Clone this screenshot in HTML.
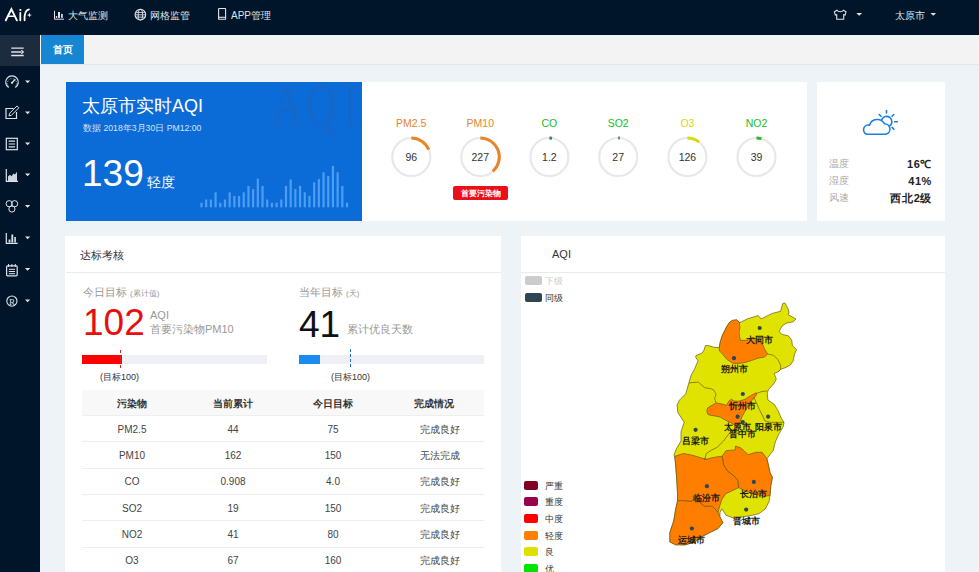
<!DOCTYPE html>
<html><head><meta charset="utf-8">
<style>
*{box-sizing:border-box;margin:0;padding:0}
html,body{width:979px;height:572px;overflow:hidden;background:#eef3f7;font-family:"Liberation Sans",sans-serif;color:#333}
div{position:absolute;white-space:nowrap}
#top{left:0;top:0;width:979px;height:35px;background:#001529}
#side{left:0;top:35px;width:40px;height:537px;background:#001529}
#toggle{left:0;top:0;width:40px;height:31px;background:#1c2b3e}
#tabs{left:40px;top:35px;width:939px;height:30px;background:#f3f3f3;border-bottom:1px solid #e2e6ea}
.tab{left:1px;top:0px;width:43px;height:29px;background:#1686d3;color:#fff;font-size:10px;line-height:30px;text-align:center;font-weight:bold}
.card{background:#fff}
.navt{top:10px;color:#dfe3e8;font-size:10px;line-height:12px;font-weight:500}
.gl{top:117px;width:60px;text-align:center;font-size:10.5px;line-height:12px}
.gv{top:151px;width:60px;text-align:center;font-size:10.5px;line-height:12px;color:#333}
.wl{left:829px;font-size:10px;color:#aaa;line-height:12px}
.wv{right:47px;font-size:11px;font-weight:bold;color:#222;line-height:12px;text-align:right;letter-spacing:0.6px}
.th{top:398px;width:100px;text-align:center;font-size:10px;line-height:12px;color:#333;font-weight:bold}
.td{width:100px;text-align:center;font-size:10px;line-height:12px;color:#444}
.lg{left:545px;font-size:9px;line-height:10px;color:#333}
.sw{left:524px;width:14px;height:9px;border-radius:2px}
svg{position:absolute;left:0;top:0}
.wm{top:-7px;font-family:'Liberation Serif',serif;font-size:60px;line-height:60px;color:#1767c8;transform:scaleX(0.7);transform-origin:0 0}
</style></head><body>
<div id="top">
  <div class="navt" style="left:68px">大气监测</div>
  <div class="navt" style="left:150px">网格监管</div>
  <div class="navt" style="left:231px">APP管理</div>
  <div class="navt" style="left:895px">太原市</div>
</div>
<div id="side"><div id="toggle"></div></div>
<div id="tabs"><div class="tab">首页</div></div>

<div class="card" style="left:66px;top:82px;width:296px;height:139px;background:#0b6bd7;overflow:hidden">
  <div class="wm" style="left:206px">A</div><div class="wm" style="left:240px">Q</div><div class="wm" style="left:280px;transform:scaleX(0.5)">I</div>
</div>
<div class="card" style="left:362px;top:82px;width:445px;height:139px"></div>
<div class="card" style="left:817px;top:82px;width:128px;height:139px"></div>
<div class="card" style="left:65px;top:236px;width:436px;height:340px"></div>
<div class="card" style="left:521px;top:236px;width:424px;height:340px"></div>

<!-- blue card text -->
<div style="left:82px;top:96px;font-size:18px;line-height:20px;color:#fff">太原市实时AQI</div>
<div style="left:83px;top:123px;font-size:8.7px;line-height:10px;color:#d3e4f8">数据 2018年3月30日 PM12:00</div>
<div style="left:82px;top:154px;font-size:37px;line-height:40px;color:#fff">139</div>
<div style="left:147px;top:174px;font-size:14px;line-height:16px;color:#fff">轻度</div>

<div class="gl" style="left:381.3px;color:#e8842a">PM2.5</div><div class="gv" style="left:381.3px">96</div>
<div class="gl" style="left:450.3px;color:#e8842a">PM10</div><div class="gv" style="left:450.3px">227</div>
<div class="gl" style="left:519.4px;color:#22bb22">CO</div><div class="gv" style="left:519.4px">1.2</div>
<div class="gl" style="left:588.2px;color:#22bb22">SO2</div><div class="gv" style="left:588.2px">27</div>
<div class="gl" style="left:657.4px;color:#d8d800">O3</div><div class="gv" style="left:657.4px">126</div>
<div class="gl" style="left:726.5px;color:#22bb22">NO2</div><div class="gv" style="left:726.5px">39</div>
<div style="left:453px;top:185.5px;width:55px;height:14px;background:#ec0f19;border-radius:2px;color:#fff;font-size:8.3px;line-height:14px;text-align:center;font-weight:bold">首要污染物</div>

<!-- weather -->
<div class="wl" style="top:158px">温度</div>
<div class="wl" style="top:175px">湿度</div>
<div class="wl" style="top:192px">风速</div>
<div class="wv" style="top:158px">16℃</div>
<div class="wv" style="top:175px">41%</div>
<div class="wv" style="top:192px">西北2级</div>

<!-- left bottom card -->
<div style="left:80px;top:249px;font-size:11px;line-height:12px;color:#333">达标考核</div>
<div style="left:66px;top:272px;width:435px;height:1px;background:#e9ecef"></div>
<div style="left:83px;top:286px;font-size:11px;line-height:12px;color:#999">今日目标 <span style="font-size:8px">(累计值)</span></div>
<div style="left:83px;top:303px;font-size:37px;line-height:40px;color:#e60f0f">102</div>
<div style="left:150px;top:309px;font-size:11px;line-height:12px;color:#999">AQI</div>
<div style="left:150px;top:323px;font-size:11px;line-height:12px;color:#999">首要污染物PM10</div>
<div style="left:82px;top:355px;width:185px;height:9px;background:#eef0f5"></div>
<div style="left:82px;top:355px;width:40px;height:9px;background:#f00"></div>
<div style="left:100px;top:372px;font-size:9px;line-height:11px;color:#333">(目标100)</div>

<div style="left:299px;top:286px;font-size:11px;line-height:12px;color:#999">当年目标 <span style="font-size:8px">(天)</span></div>
<div style="left:299px;top:305px;font-size:37px;line-height:40px;color:#111">41</div>
<div style="left:347px;top:323px;font-size:11px;line-height:12px;color:#999">累计优良天数</div>
<div style="left:299px;top:355px;width:185px;height:9px;background:#eef0f5"></div>
<div style="left:299px;top:355px;width:21px;height:9px;background:#1a8cf0"></div>
<div style="left:331px;top:372px;font-size:9px;line-height:11px;color:#333">(目标100)</div>

<div style="left:82px;top:390px;width:402px;height:25px;background:#f8f8f8"></div>
<div class="th" style="left:82px">污染物</div>
<div class="th" style="left:183px">当前累计</div>
<div class="th" style="left:283px">今日目标</div>
<div class="th" style="left:384px">完成情况</div>
<div style="left:82px;top:415px;width:402px;height:1px;background:#eee"></div>
<div style="left:82px;top:441px;width:402px;height:1px;background:#eee"></div>
<div style="left:82px;top:468px;width:402px;height:1px;background:#eee"></div>
<div style="left:82px;top:494px;width:402px;height:1px;background:#eee"></div>
<div style="left:82px;top:520px;width:402px;height:1px;background:#eee"></div>
<div style="left:82px;top:547px;width:402px;height:1px;background:#eee"></div>

<div class="td" style="left:82px;top:424px">PM2.5</div><div class="td" style="left:183px;top:424px">44</div><div class="td" style="left:283px;top:424px">75</div><div class="td" style="left:390px;top:424px">完成良好</div>
<div class="td" style="left:82px;top:450px">PM10</div><div class="td" style="left:183px;top:450px">162</div><div class="td" style="left:283px;top:450px">150</div><div class="td" style="left:390px;top:450px">无法完成</div>
<div class="td" style="left:82px;top:476px">CO</div><div class="td" style="left:183px;top:476px">0.908</div><div class="td" style="left:283px;top:476px">4.0</div><div class="td" style="left:390px;top:476px">完成良好</div>
<div class="td" style="left:82px;top:503px">SO2</div><div class="td" style="left:183px;top:503px">19</div><div class="td" style="left:283px;top:503px">150</div><div class="td" style="left:390px;top:503px">完成良好</div>
<div class="td" style="left:82px;top:529px">NO2</div><div class="td" style="left:183px;top:529px">41</div><div class="td" style="left:283px;top:529px">80</div><div class="td" style="left:390px;top:529px">完成良好</div>
<div class="td" style="left:82px;top:555px">O3</div><div class="td" style="left:183px;top:555px">67</div><div class="td" style="left:283px;top:555px">160</div><div class="td" style="left:390px;top:555px">完成良好</div>

<!-- map card -->
<div style="left:552px;top:248px;font-size:11px;line-height:12px;color:#333">AQI</div>
<div style="left:521px;top:272px;width:424px;height:1px;background:#e9ecef"></div>
<div style="left:525px;top:276px;width:17px;height:9px;border-radius:2px;background:#ccc"></div>
<div class="lg" style="top:276px;color:#ccc">下级</div>
<div style="left:525px;top:293px;width:17px;height:9px;border-radius:2px;background:#2f4554"></div>
<div class="lg" style="top:293px">同级</div>
<div class="sw" style="top:481px;background:#7e0023"></div><div class="lg" style="top:481px">严重</div>
<div class="sw" style="top:497px;background:#99004c"></div><div class="lg" style="top:497px">重度</div>
<div class="sw" style="top:514px;background:#ff0000"></div><div class="lg" style="top:514px">中度</div>
<div class="sw" style="top:531px;background:#ff7e00"></div><div class="lg" style="top:531px">轻度</div>
<div class="sw" style="top:547px;background:#e0e000"></div><div class="lg" style="top:547px">良</div>
<div class="sw" style="top:564px;background:#00e400"></div><div class="lg" style="top:564px">优</div>

<svg width="979" height="572" viewBox="0 0 979 572" style="font-family:'Liberation Sans',sans-serif">
<g fill="none" stroke="#dfe3ea" stroke-width="1.1">
<!-- hamburger -->
<path d="M11.2 48.1H23.7M11.2 52H21.5M11.2 55.5H23.7" stroke-width="1.3"/>
<path d="M21.3 50.3L23.4 52L21.3 53.7" stroke-width="1.1"/>
<!-- speedometer -->
<path d="M8.7 87.6A6.3 6.3 0 1 1 15.3 87.6" stroke-width="1.2"/>
<path d="M8.5 86.2A4.6 4.6 0 1 1 15.5 86.2" stroke-width="1" stroke-dasharray="0.7 1.5"/>
<path d="M12 82.8L15.3 79.3" stroke-width="1.3"/>
<circle cx="12" cy="82.8" r="1.1" fill="#dfe3ea" stroke="none"/>
<!-- edit -->
<path d="M13.5 108.5H6V118.5H16.5V112" stroke-width="1.2"/>
<path d="M9 116L9.6 113.3L17 105.9L18.9 107.8L11.5 115.2Z" stroke-width="1"/>
<!-- list -->
<rect x="6.3" y="138.3" width="11" height="11.4" stroke-width="1.2"/>
<path d="M8.6 141.2H15M8.6 144H15M8.6 146.8H15" stroke-width="1.2"/>
<!-- area chart -->
<path d="M6.3 169V181.3H18" stroke-width="1.2"/>
<path d="M8 181V176.5L10 174.8L11.5 176.3L13.5 173.5L15 174.5L17 171.8V181Z" fill="#cfd5dc" stroke="none"/>
<!-- three circles -->
<circle cx="9.2" cy="203.7" r="3.1" stroke-width="1"/>
<circle cx="14.6" cy="203.7" r="3.1" stroke-width="1"/>
<circle cx="11.9" cy="209" r="3.1" stroke-width="1"/>
<!-- bar chart -->
<path d="M6.3 233V243.3H17.7" stroke-width="1.2"/>
<rect x="8.6" y="239.5" width="1.8" height="3" fill="#dfe3ea" stroke="none"/>
<rect x="11.4" y="234.5" width="1.8" height="8" fill="#dfe3ea" stroke="none"/>
<rect x="14.2" y="237" width="1.8" height="5.5" fill="#c8ced6" stroke="none"/>
<!-- notepad -->
<rect x="6.6" y="265.8" width="10.6" height="10" rx="1" stroke-width="1.2"/>
<path d="M8.5 264V266.8M11.9 264V266.8M15.3 264V266.8" stroke-width="1"/>
<path d="M8.8 269.3H15M8.8 271.5H15M8.8 273.7H15" stroke-width="1"/>
<!-- R -->
<circle cx="11.9" cy="301.1" r="5.1" stroke-width="1.1"/>
</g>
<text x="11.9" y="304.6" text-anchor="middle" font-family="Liberation Serif" font-size="9" fill="#dfe3ea">R</text>
<g fill="#dfe3ea">
<path d="M25 80.5H30.2L27.6 83.3Z"/>
<path d="M25 111.5H30.2L27.6 114.3Z"/>
<path d="M25 142.5H30.2L27.6 145.3Z"/>
<path d="M25 173.5H30.2L27.6 176.3Z"/>
<path d="M25 205H30.2L27.6 207.8Z"/>
<path d="M25 236.5H30.2L27.6 239.3Z"/>
<path d="M25 268H30.2L27.6 270.8Z"/>
<path d="M25 299.5H30.2L27.6 302.3Z"/>
<!-- top carets -->
<path d="M856.3 13H862.1L859.2 15.8Z"/>
<path d="M930.5 13H936.1L933.3 15.8Z"/>
</g>
<!-- top nav icons -->
<g fill="none" stroke="#dfe3ea" stroke-width="1">
<path d="M54.5 10.8V19.2H64"/>
</g>
<g fill="#dfe3ea"><rect x="55.8" y="16" width="1.4" height="1.9"/><rect x="58" y="12" width="2" height="5.9"/><rect x="61" y="13.9" width="1.9" height="4" fill="#c8ced6"/></g>
<g fill="none" stroke="#dfe3ea" stroke-width="1">
<circle cx="140.4" cy="14.7" r="5.3" stroke-width="1.1"/>
<ellipse cx="140.4" cy="14.7" rx="2.2" ry="5.3" stroke-width="0.9"/>
<path d="M135.5 12.4H145.3M135.2 14.8H145.6M135.5 17.1H145.3" stroke-width="0.9"/>
<rect x="218.6" y="8.5" width="7" height="10.8" rx="0.4" stroke-width="1.1"/>
<path d="M218.6 17.3H225.6" stroke-width="1.1"/>
<path d="M837 10.2L834.4 11.8L835.3 15.1L836.7 14.7V19.3H843.7V14.7L845.1 15.1L846 11.8L843.4 10.2C842.7 11.3 841.5 11.7 840.2 11.7C838.9 11.7 837.7 11.3 837 10.2Z" stroke-width="1.1"/>
</g>
<!-- logo -->
<g fill="none" stroke="#fff" stroke-linecap="round">
<path d="M5.8 20.3L11.4 9.2L16.9 20.3" stroke-width="1.9"/>
<path d="M8.6 16.2H14.2" stroke-width="1.5"/>
<path d="M20.3 12.8V20.3" stroke-width="1.8"/>
<path d="M24.6 20.3C24.2 14.5 25.5 10.3 28.9 9.4" stroke-width="1.8"/>
</g>
<circle cx="20.4" cy="10" r="1.1" fill="#fff"/>
<path d="M29.4 12.6L30 14.5L31.9 15.1L30 15.7L29.4 17.6L28.8 15.7L26.9 15.1L28.8 14.5Z" fill="#fff"/>
<!-- weather cloud -->
<g fill="none" stroke="#1b7ee4" stroke-width="1.6" stroke-linecap="round">
<path d="M867 134.3H886A5.4 5.4 0 0 0 884.5 123.7A8.2 8.2 0 0 0 869.5 125.2A4.6 4.6 0 1 0 867 134.3Z"/>
<path d="M881.7 119.6A5.3 5.3 0 1 1 889.5 126.1"/>
<path d="M886.5 113V110.6M892 116.3L893.8 114.5M894.7 121.8H897.3M892 127.3L893.8 129.1M881 116.3L879.2 114.5"/>
</g>

<rect x="200.40" y="202.7" width="2.2" height="4.6" fill="#4c9df4"/>
<rect x="205.09" y="199.5" width="2.2" height="7.8" fill="#4c9df4"/>
<rect x="209.79" y="199.5" width="2.2" height="7.8" fill="#4c9df4"/>
<rect x="214.48" y="192.3" width="2.2" height="15.0" fill="#4c9df4"/>
<rect x="219.18" y="202.7" width="2.2" height="4.6" fill="#4c9df4"/>
<rect x="223.87" y="199.5" width="2.2" height="7.8" fill="#4c9df4"/>
<rect x="228.56" y="192.3" width="2.2" height="15.0" fill="#4c9df4"/>
<rect x="233.26" y="195.9" width="2.2" height="11.4" fill="#4c9df4"/>
<rect x="237.95" y="195.9" width="2.2" height="11.4" fill="#4c9df4"/>
<rect x="242.65" y="192.3" width="2.2" height="15.0" fill="#4c9df4"/>
<rect x="247.34" y="185.9" width="2.2" height="21.4" fill="#4c9df4"/>
<rect x="252.03" y="189.1" width="2.2" height="18.2" fill="#4c9df4"/>
<rect x="256.73" y="178.6" width="2.2" height="28.7" fill="#4c9df4"/>
<rect x="261.42" y="185.9" width="2.2" height="21.4" fill="#4c9df4"/>
<rect x="266.12" y="199.5" width="2.2" height="7.8" fill="#4c9df4"/>
<rect x="270.81" y="202.7" width="2.2" height="4.6" fill="#4c9df4"/>
<rect x="275.50" y="202.7" width="2.2" height="4.6" fill="#4c9df4"/>
<rect x="280.20" y="199.5" width="2.2" height="7.8" fill="#4c9df4"/>
<rect x="284.89" y="185.9" width="2.2" height="21.4" fill="#4c9df4"/>
<rect x="289.59" y="179.5" width="2.2" height="27.8" fill="#4c9df4"/>
<rect x="294.28" y="189.1" width="2.2" height="18.2" fill="#4c9df4"/>
<rect x="298.97" y="185.9" width="2.2" height="21.4" fill="#4c9df4"/>
<rect x="303.67" y="192.3" width="2.2" height="15.0" fill="#4c9df4"/>
<rect x="308.36" y="195.9" width="2.2" height="11.4" fill="#4c9df4"/>
<rect x="313.06" y="182.3" width="2.2" height="25.0" fill="#4c9df4"/>
<rect x="317.75" y="179.1" width="2.2" height="28.2" fill="#4c9df4"/>
<rect x="322.44" y="172.3" width="2.2" height="35.0" fill="#4c9df4"/>
<rect x="327.14" y="175.9" width="2.2" height="31.4" fill="#4c9df4"/>
<rect x="331.83" y="165.9" width="2.2" height="41.4" fill="#4c9df4"/>
<rect x="336.53" y="172.3" width="2.2" height="35.0" fill="#4c9df4"/>
<rect x="341.22" y="185.9" width="2.2" height="21.4" fill="#4c9df4"/>
<rect x="345.91" y="202.7" width="2.2" height="4.6" fill="#4c9df4"/>
<circle cx="411.3" cy="157" r="19" fill="none" stroke="#e8e8e8" stroke-width="2.2"/>
<path d="M411.3,138 A19,19 0 0 1 428.79,149.58" fill="none" stroke="#e8842a" stroke-width="3"/>
<circle cx="480.3" cy="157" r="19" fill="none" stroke="#e8e8e8" stroke-width="2.2"/>
<path d="M480.3,138 A19,19 0 0 1 492.77,171.34" fill="none" stroke="#e8842a" stroke-width="3"/>
<circle cx="549.4" cy="157" r="19" fill="none" stroke="#e8e8e8" stroke-width="2.2"/>
<path d="M549.4,138 A19,19 0 0 1 552.04,138.18" fill="none" stroke="#3a8f3a" stroke-width="3"/>
<circle cx="618.2" cy="157" r="19" fill="none" stroke="#e8e8e8" stroke-width="2.2"/>
<path d="M618.2,138 A19,19 0 0 1 619.86,138.07" fill="none" stroke="#3a8f3a" stroke-width="3"/>
<circle cx="687.4" cy="157" r="19" fill="none" stroke="#e8e8e8" stroke-width="2.2"/>
<path d="M687.4,138 A19,19 0 0 1 699.10,142.03" fill="none" stroke="#d4dc10" stroke-width="3"/>
<circle cx="756.5" cy="157" r="19" fill="none" stroke="#e8e8e8" stroke-width="2.2"/>
<path d="M756.5,138 A19,19 0 0 1 761.42,138.65" fill="none" stroke="#2db52d" stroke-width="3"/>
<!-- dashed markers -->
<line x1="120.5" y1="350" x2="120.5" y2="369" stroke="#e02020" stroke-width="1" stroke-dasharray="3,2"/>
<line x1="350.5" y1="349" x2="350.5" y2="368" stroke="#1a6fd0" stroke-width="1" stroke-dasharray="3,2"/>
<polygon points="782.7,303.6 784.8,302.9 787.6,307.8 789.0,312.0 788.3,314.8 796.0,319.0 793.1,321.8 786.2,323.2 782.0,326.0 779.2,331.6 782.0,334.4 788.3,335.8 791.7,340.0 792.4,345.6 796.6,349.7 794.5,354.0 793.1,361.0 790.3,365.1 784.8,367.9 780.6,369.3 777.8,372.1 774.2,373.4 776.3,379.0 774.2,383.2 768.6,389.5 767.2,393.0 767.9,400.0 774.2,404.2 778.4,411.2 781.2,418.1 784.0,422.3 783.3,426.5 778.4,434.9 775.6,441.2 774.7,444.4 773.2,450.7 766.9,458.6 770.0,472.7 772.4,477.5 770.8,485.3 770.0,495.5 769.2,501.0 765.3,508.9 759.0,513.6 752.7,515.2 743.3,516.8 733.9,518.3 726.0,515.2 722.1,508.9 720.0,512.0 719.9,516.9 722.8,522.7 718.0,528.5 710.3,532.3 702.6,536.2 694.9,541.9 685.3,544.8 675.7,544.8 669.9,541.9 669.9,532.3 673.8,520.8 675.7,509.2 677.6,500.6 677.6,493.8 676.7,478.5 675.7,465.0 674.7,456.3 673.9,455.2 676.3,448.9 681.0,441.0 681.0,431.6 684.2,422.2 677.9,412.7 677.1,404.9 679.4,400.2 685.7,393.9 688.9,382.9 691.2,375.0 694.4,369.4 698.0,360.8 695.6,357.1 696.2,355.3 701.7,353.5 704.2,349.8 705.4,345.5 707.8,345.5 714.0,347.3 719.3,347.5 720.4,341.4 722.5,335.1 726.7,326.7 729.8,322.0 732.5,320.4 736.7,319.9 739.5,322.5 740.3,322.5 747.0,319.0 758.2,315.5 761.0,319.0 772.2,313.4 780.6,311.3" fill="#e0e300" stroke="#6a5a10" stroke-width="0.7"/>
<polygon points="732.5,320.4 736.7,319.9 739.5,322.5 739.8,327.7 739.1,333.0 740.3,340.3 746.6,340.3 752.9,337.2 759.2,340.3 762.4,343.5 764.5,348.7 767.6,354.0 764.5,357.1 758.2,358.2 751.9,360.3 745.6,362.4 739.3,363.4 733.0,363.4 726.7,359.2 722.5,354.0 719.3,350.8 719.3,347.5 720.4,341.4 722.5,335.1 726.7,326.7 729.8,322.0" fill="#ff7e00" stroke="#6a5a10" stroke-width="0.7"/>
<polygon points="707.6,408.1 710.5,406.1 716.1,402.9 722.5,404.1 726.5,405.3 729.0,400.9 731.4,399.3 733.8,400.9 738.6,401.3 745.0,399.3 751.5,395.2 756.3,392.8 756.3,395.2 751.5,400.9 748.3,405.7 745.0,411.3 741.8,417.0 740.2,421.8 739.4,424.2 737.8,426.2 734.6,425.0 730.6,422.6 725.7,420.2 720.1,417.0 716.1,416.2 711.3,415.4 708.0,414.5 706.8,411.3" fill="#ff7e00" stroke="#6a5a10" stroke-width="0.7"/>
<polygon points="722.1,456.2 726.0,450.7 735.4,449.9 735.4,446.0 740.2,447.6 744.1,450.7 748.0,454.7 755.9,452.3 762.2,452.3 766.9,458.6 770.0,472.7 772.4,477.5 770.8,485.3 770.0,495.5 763.7,496.3 754.3,494.0 746.4,491.6 738.6,487.7 737.8,480.6 733.9,475.9 727.6,471.2 723.6,464.9" fill="#ff7e00" stroke="#6a5a10" stroke-width="0.7"/>
<polygon points="674.7,456.3 683.4,453.5 693.0,455.4 702.6,458.3 706.5,459.2 714.2,457.3 722.1,456.2 723.6,464.9 727.6,471.2 733.9,475.9 737.8,480.6 738.6,487.7 731.5,491.0 725.7,493.8 721.8,499.6 719.9,505.4 718.0,512.1 712.2,506.3 704.5,506.3 700.7,503.5 696.8,497.7 691.1,501.5 681.5,500.6 677.6,500.6 677.6,493.8 676.7,478.5 675.7,465.0" fill="#ff7e00" stroke="#6a5a10" stroke-width="0.7"/>
<polygon points="677.6,500.6 681.5,500.6 691.1,501.5 696.8,497.7 700.7,503.5 704.5,506.3 712.2,506.3 718.0,512.1 719.9,516.9 722.8,522.7 718.0,528.5 710.3,532.3 702.6,536.2 694.9,541.9 685.3,544.8 675.7,544.8 669.9,541.9 669.9,532.3 673.8,520.8 675.7,509.2" fill="#ff7e00" stroke="#6a5a10" stroke-width="0.7"/>
<polyline points="767.6,354.0 773.6,355.3 777.8,359.5 780.6,365.1 780.6,369.3 777.8,372.1" fill="none" stroke="#6a5a10" stroke-width="0.7"/>
<polyline points="688.9,382.9 698.3,382.1 704.6,387.6 711.3,388.8 714.1,390.4 716.1,394.4 714.5,398.5 716.1,402.9" fill="none" stroke="#6a5a10" stroke-width="0.7"/>
<polyline points="756.3,393.5 761.6,391.6 767.2,390.9" fill="none" stroke="#6a5a10" stroke-width="0.7"/>
<polyline points="754.0,397.5 759.5,409.8 763.0,416.7 765.0,421.0 770.0,422.3 784.0,422.3" fill="none" stroke="#6a5a10" stroke-width="0.7"/>
<polyline points="737.8,426.2 733.0,430.0 728.2,434.7 723.5,441.0 717.2,447.3 710.9,450.5 706.2,453.6 704.6,459.9" fill="none" stroke="#6a5a10" stroke-width="0.7"/>
<polyline points="704.6,459.9 706.5,459.2" fill="none" stroke="#6a5a10" stroke-width="0.7"/>
<circle cx="759.7" cy="328" r="2.1" fill="#2f4554"/>
<circle cx="734" cy="358.2" r="2.1" fill="#2f4554"/>
<circle cx="742.8" cy="394" r="2.1" fill="#2f4554"/>
<circle cx="737.6" cy="416.7" r="2.1" fill="#2f4554"/>
<circle cx="742.8" cy="422" r="2.1" fill="#2f4554"/>
<circle cx="768.1" cy="416.7" r="2.1" fill="#2f4554"/>
<circle cx="695.6" cy="429.8" r="2.1" fill="#2f4554"/>
<circle cx="706.9" cy="486.2" r="2.1" fill="#2f4554"/>
<circle cx="753.8" cy="481.9" r="2.1" fill="#2f4554"/>
<circle cx="746.2" cy="509.6" r="2.1" fill="#2f4554"/>
<circle cx="691.9" cy="528.5" r="2.1" fill="#2f4554"/>
<text x="759.7" y="343.0" text-anchor="middle" font-size="8.6" font-weight="bold" fill="#1a1a1a">大同市</text>
<text x="734" y="371.9" text-anchor="middle" font-size="8.6" font-weight="bold" fill="#1a1a1a">朔州市</text>
<text x="742.8" y="409.09999999999997" text-anchor="middle" font-size="8.6" font-weight="bold" fill="#1a1a1a">忻州市</text>
<text x="737.6" y="430.4" text-anchor="middle" font-size="8.6" font-weight="bold" fill="#1a1a1a">太原市</text>
<text x="742.8" y="437.4" text-anchor="middle" font-size="8.6" font-weight="bold" fill="#1a1a1a">晋中市</text>
<text x="768.1" y="430.4" text-anchor="middle" font-size="8.6" font-weight="bold" fill="#1a1a1a">阳泉市</text>
<text x="695.6" y="444.4" text-anchor="middle" font-size="8.6" font-weight="bold" fill="#1a1a1a">吕梁市</text>
<text x="706.9" y="500.9" text-anchor="middle" font-size="8.6" font-weight="bold" fill="#1a1a1a">临汾市</text>
<text x="753.8" y="496.7" text-anchor="middle" font-size="8.6" font-weight="bold" fill="#1a1a1a">长治市</text>
<text x="746.2" y="524.0" text-anchor="middle" font-size="8.6" font-weight="bold" fill="#1a1a1a">晋城市</text>
<text x="691.9" y="543.2" text-anchor="middle" font-size="8.6" font-weight="bold" fill="#1a1a1a">运城市</text>
</svg>
</body></html>
